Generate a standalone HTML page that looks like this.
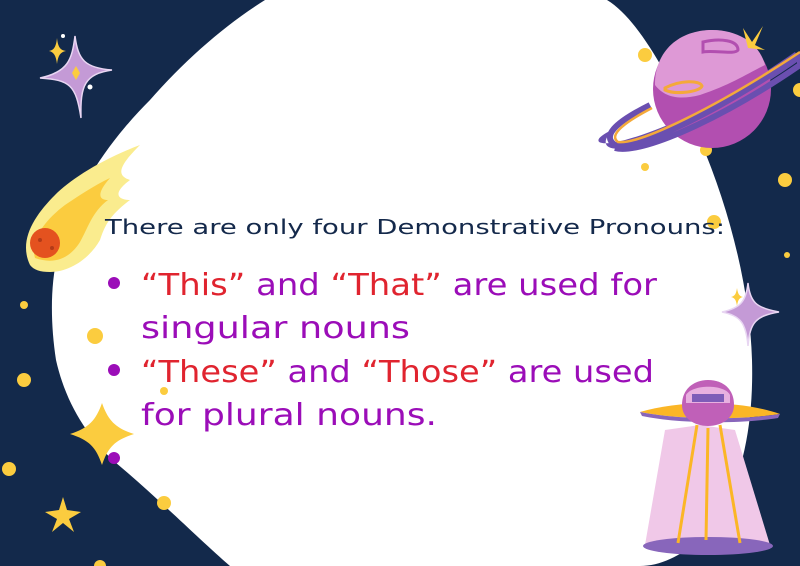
<!DOCTYPE html>
<html><head><meta charset="utf-8"><style>
html,body{margin:0;padding:0;background:#13294b;}
svg{display:block}
</style></head><body>
<svg width="800" height="566" viewBox="0 0 800 566" xmlns="http://www.w3.org/2000/svg">
<rect width="800" height="566" fill="#13294b"/>
<path d="M265 0 L607 0 C640 20 670 80 700 140 C730 210 750 290 752 360 C754 430 740 500 700 540 C680 556 660 566 640 566 L230 566 C200 540 160 500 115 462 C85 435 65 400 56 360 C50 320 50 280 60 245 C75 190 110 140 150 100 C185 60 225 25 265 0 Z" fill="#fff"/>
<g fill="#fbcc3f">
<circle cx="24" cy="305" r="4"/><circle cx="95" cy="336" r="8"/><circle cx="24" cy="380" r="7"/>
<circle cx="164" cy="391" r="4"/><circle cx="9" cy="469" r="7"/><circle cx="164" cy="503" r="7"/>
<circle cx="100" cy="566" r="6"/><circle cx="645" cy="55" r="7"/><circle cx="645" cy="167" r="4"/>
<circle cx="785" cy="180" r="7"/><circle cx="800" cy="90" r="7"/><circle cx="714" cy="222" r="7"/>
<circle cx="787" cy="255" r="3"/><circle cx="706" cy="150" r="6"/>
</g>
<path d="M102 403 C108 420 115 428 134 434 C115 440 108 447 102 465 C96 447 89 440 70 434 C89 428 96 420 102 403Z" fill="#fbcc3f"/>
<path d="M63 497 L67 510 L81 512 L69 519 L74 532 L63 523 L52 532 L57 519 L45 512 L59 510Z" fill="#fbcc3f"/>
<path d="M75 36 C78 60 85 68 112 70 C85 74 80 85 81 118 C76 85 70 80 40 78 C68 72 72 60 75 36Z" fill="#c49ad6" stroke="#e8d6f2" stroke-width="1.5"/>
<path d="M76 66 L80 73 L76 80 L72 73Z" fill="#fbcc3f"/>
<path d="M57 38 C58 47 60 50 66 51 C60 52 58 56 57 64 C56 56 54 52 49 51 C54 50 56 47 57 38Z" fill="#fbcc3f"/>
<circle cx="63" cy="36" r="2" fill="#fff"/><circle cx="90" cy="87" r="2.5" fill="#fff"/>
<path d="M748 283 C750 302 756 308 779 312 C756 316 750 322 748 346 C746 322 740 316 722 312 C740 308 746 302 748 283Z" fill="#c49ad6" stroke="#e8d6f2" stroke-width="1.5"/>
<path d="M737 288 C738 294 739 296 743 297 C739 298 738 300 737 306 C736 300 735 298 731 297 C735 296 736 294 737 288Z" fill="#fbcc3f"/>
<path d="M30 265 C18 240 35 215 55 195 C70 180 100 160 140 145 C120 165 115 175 130 180 C110 195 120 200 130 200 C110 215 105 225 100 240 C90 258 70 272 50 272 C40 272 34 270 30 265Z" fill="#faec8e"/>
<path d="M35 258 C30 240 45 220 65 205 C80 195 95 185 110 178 C95 195 100 200 108 200 C92 212 88 228 80 242 C70 258 55 265 35 258Z" fill="#fbcc3f"/>
<circle cx="45" cy="243" r="15" fill="#e4521f"/>
<circle cx="40" cy="240" r="2" fill="#b33a18"/><circle cx="52" cy="248" r="2" fill="#b33a18"/>
<path d="M612 130 C590 140 595 148 625 140 C680 125 740 90 795 52 L800 60 C750 95 690 130 640 145 C615 152 595 150 612 130Z" fill="#6a4fb0"/>
<circle cx="712" cy="89" r="59" fill="#b24fb0"/>
<path d="M655 85 C655 50 680 30 712 30 C740 30 760 45 765 65 C745 75 730 85 700 95 C680 100 665 98 655 85Z" fill="#de99d6"/>
<path d="M743 28 L752 42 L763 26 L755 45 L765 50 L748 48Z" fill="#fbcc3f"/>
<path d="M703 42 C720 38 738 40 738 50 C735 55 715 50 703 52Z" fill="none" stroke="#b24fb0" stroke-width="3"/>
<path d="M665 88 C680 80 700 80 702 86 C700 92 675 95 665 90Z" fill="none" stroke="#f4a93a" stroke-width="3"/>
<path d="M650 105 C620 120 600 135 615 145 C640 150 720 110 800 55 L800 65 C720 120 640 155 615 148" fill="none" stroke="#6a4fb0" stroke-width="6"/>
<path d="M652 108 C625 122 608 135 618 142 C640 145 720 105 800 52" fill="none" stroke="#f4a93a" stroke-width="2.5"/>
<path d="M665 430 L700 425 L735 430 L770 545 L645 545Z" fill="#f0c8e8"/>
<ellipse cx="708" cy="546" rx="65" ry="9" fill="#8866bb"/>
<g stroke="#fbb626" stroke-width="3"><line x1="697" y1="425" x2="678" y2="543"/><line x1="708" y1="428" x2="706" y2="540"/><line x1="720" y1="425" x2="740" y2="543"/></g>
<path d="M640 412 C680 400 740 400 780 414 C740 420 680 420 640 412Z" fill="#fbb626"/>
<path d="M640 412 C680 420 740 420 780 414 L778 418 C740 424 680 424 642 416Z" fill="#8866bb"/>
<path d="M682 405 C682 388 695 380 708 380 C722 380 734 388 734 405 C734 418 722 426 708 426 C694 426 682 418 682 405Z" fill="#c060b8"/>
<path d="M686 395 C692 384 725 384 730 395 L730 403 L686 403Z" fill="#e8b0e0"/>
<rect x="692" y="394" width="32" height="8" fill="#7e5cb8"/>
<g font-family="DejaVu Sans, sans-serif">
<text x="105" y="234" font-size="20" fill="#14294b" textLength="620" lengthAdjust="spacingAndGlyphs">There are only four Demonstrative Pronouns:</text>
<g font-size="30" fill="#9b0db8">
<text x="141" y="295" textLength="516" lengthAdjust="spacingAndGlyphs"><tspan fill="#e0242f">“This”</tspan> and <tspan fill="#e0242f">“That”</tspan> are used for</text>
<text x="141" y="338" textLength="269" lengthAdjust="spacingAndGlyphs">singular nouns</text>
<text x="141" y="382" textLength="513" lengthAdjust="spacingAndGlyphs"><tspan fill="#e0242f">“These”</tspan> and <tspan fill="#e0242f">“Those”</tspan> are used</text>
<text x="141" y="425" textLength="296" lengthAdjust="spacingAndGlyphs">for plural nouns.</text>
</g>
</g>
<g fill="#9b0db8"><circle cx="114" cy="283" r="6"/><circle cx="114" cy="370" r="6"/><circle cx="114" cy="458" r="6"/></g>
</svg>
</body></html>
